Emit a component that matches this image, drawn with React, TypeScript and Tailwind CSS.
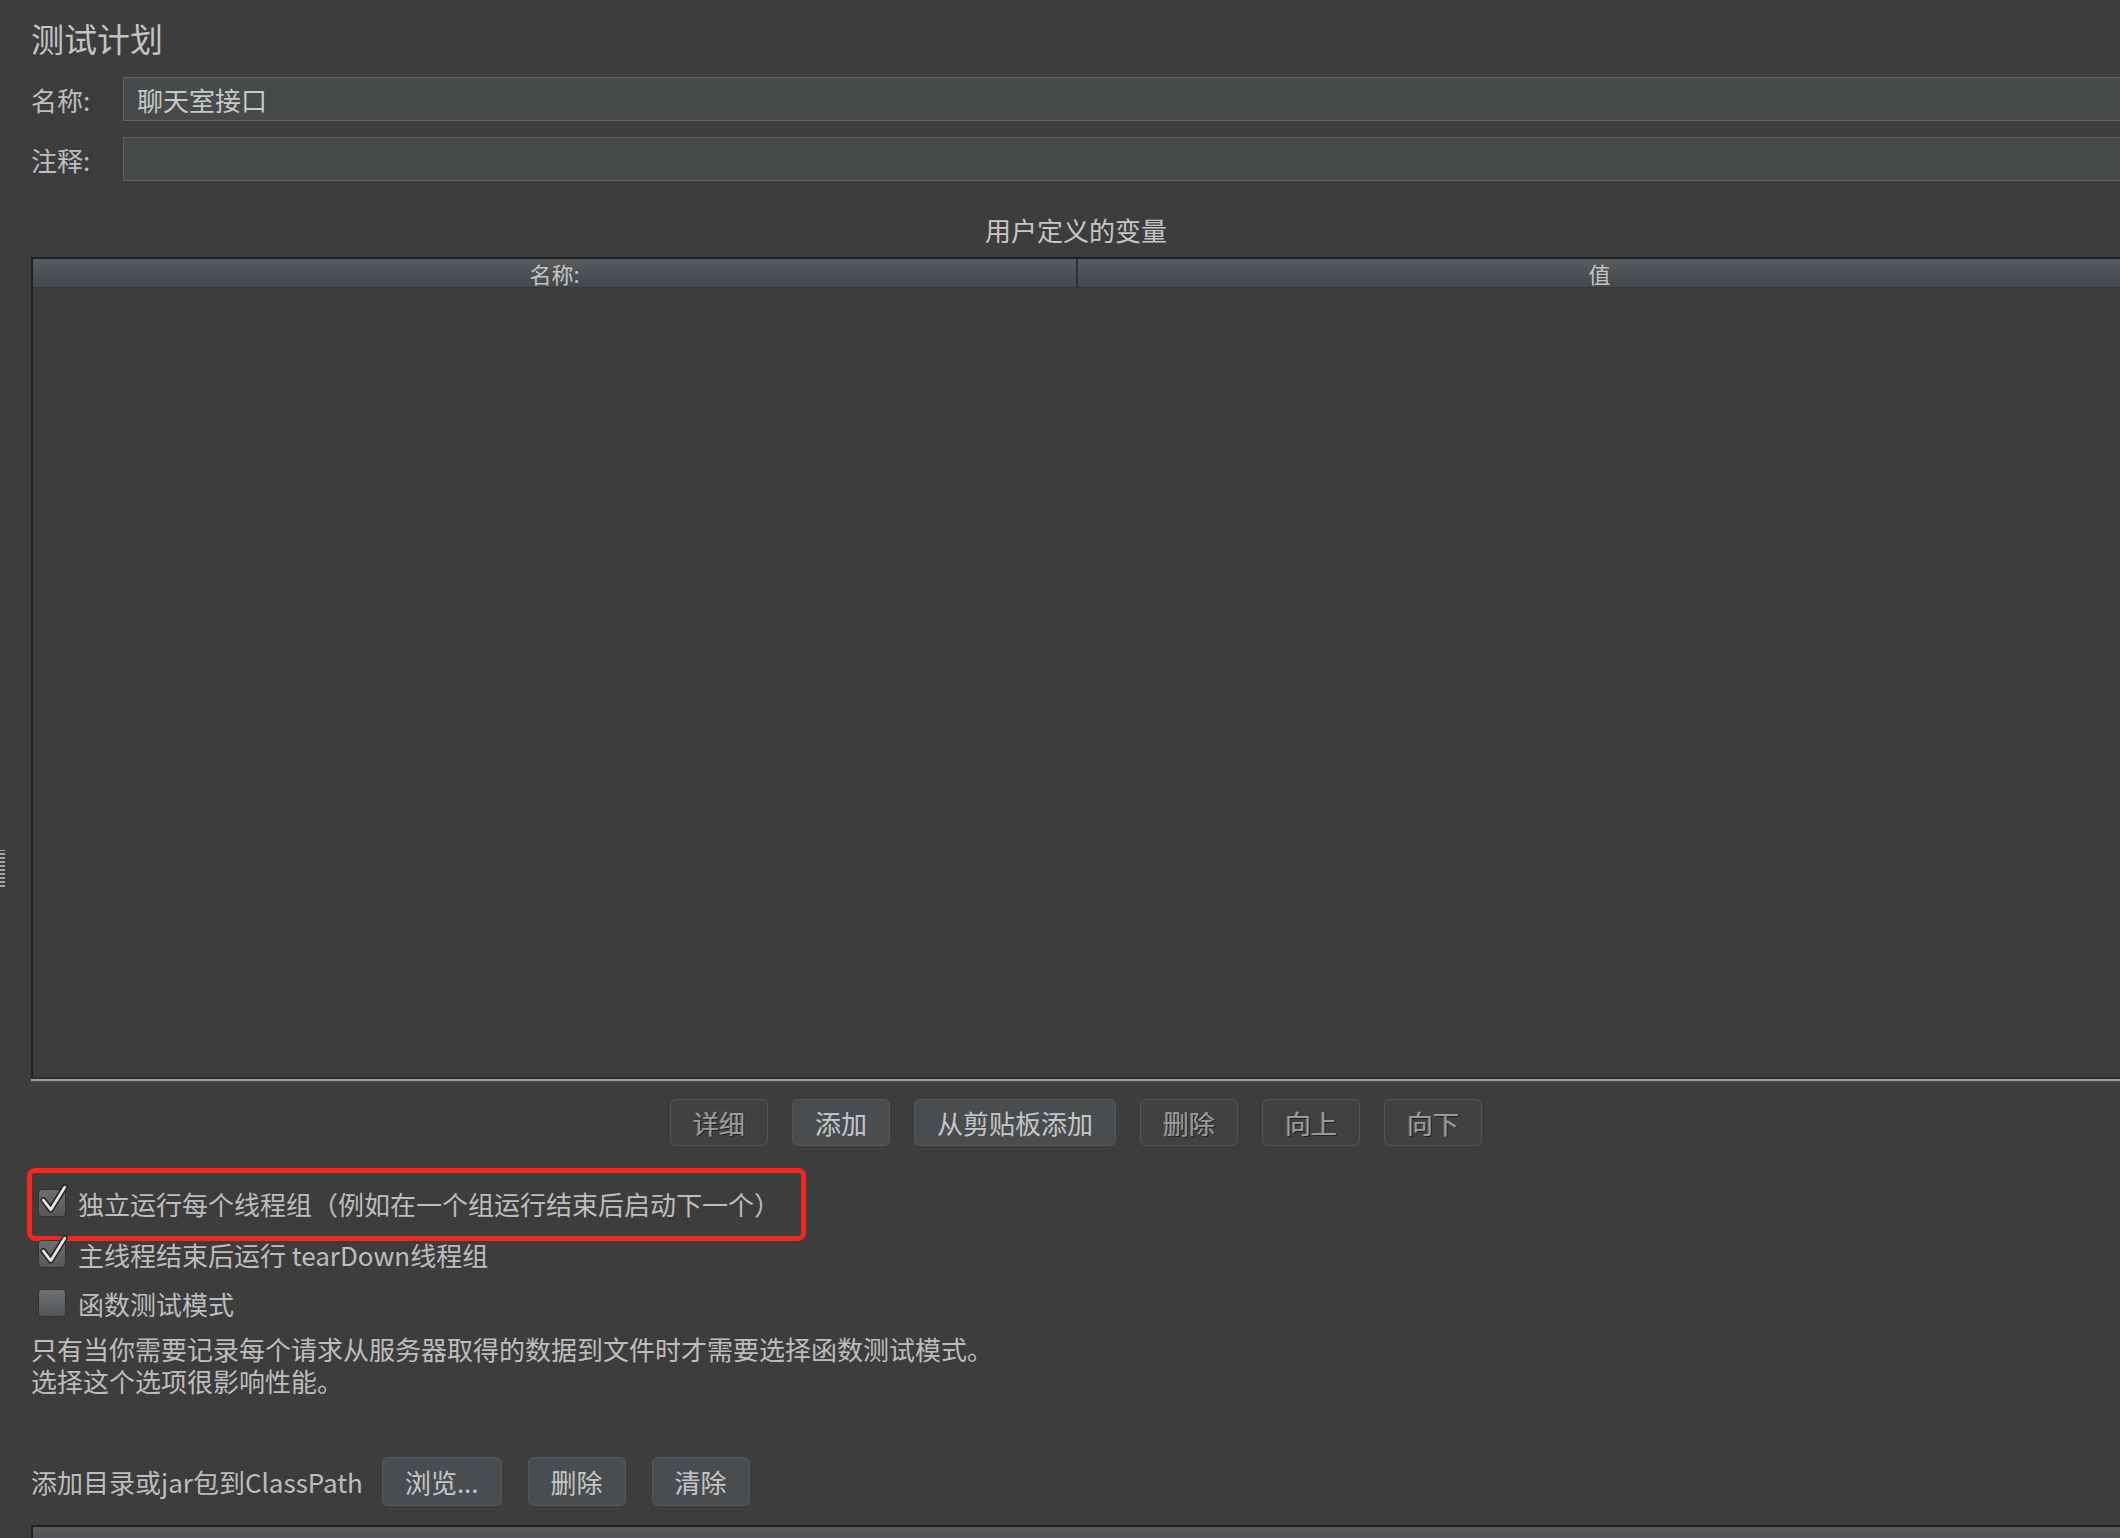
import type { ReactNode } from "react";

const font = "font-['Noto_Sans_CJK_SC','Noto_Sans',sans-serif]";

function Field({ label, value }: { label: string; value?: string }) {
  return (
    <div className="flex items-center h-[44px] mr-[-40px]">
      <span className="w-[92px] shrink-0 text-[26px] text-[#bdbdbd]">{label}</span>
      <div className="flex-1 h-full flex items-center bg-[#464a4b] border border-[#5f6262] pl-[13px] text-[26px] text-[#c8c8c8]">
        {value}
      </div>
    </div>
  );
}

function Btn({ children, enabled = false }: { children: ReactNode; enabled?: boolean }) {
  return (
    <div
      className={[
        "h-full flex items-center justify-center px-[22px] rounded-[6px] border text-[26px]",
        enabled
          ? "bg-[#4a4d50] border-[#55595b] text-[#c6c6c6]"
          : "bg-[#3f4142] border-[#535658] text-[#9b9b9b] [text-shadow:1px_1px_0_#222,-1px_0_0_#666]",
      ].join(" ")}
    >
      {children}
    </div>
  );
}

function CheckBox({ checked }: { checked: boolean }) {
  return (
    <div className="relative w-[28px] h-[28px] rounded-[4px] border border-[#333] bg-gradient-to-b from-[#6c6f71] to-[#55585a]">
      {checked && (
        <svg viewBox="0 0 28 28" className="absolute left-0 top-[-5px] w-[30px] h-[30px] overflow-visible">
          <path d="M4 14 L11 23 L24 2" fill="none" stroke="#262626" strokeWidth="5.5" strokeLinecap="round" strokeLinejoin="round" />
          <path d="M4 14 L11 23 L24 2" fill="none" stroke="#e8e8e8" strokeWidth="2.6" strokeLinecap="round" strokeLinejoin="round" />
        </svg>
      )}
    </div>
  );
}

function CheckRow({ checked, label, className = "" }: { checked: boolean; label: string; className?: string }) {
  return (
    <div className={`flex items-center h-[36px] pl-[7px] gap-[12px] ${className}`}>
      <CheckBox checked={checked} />
      <span className="text-[26px] text-[#bdbdbd] whitespace-nowrap">{label}</span>
    </div>
  );
}

export default function App() {
  return (
    <div className={`relative w-[2120px] h-[1538px] overflow-hidden bg-[#3d3d3d] ${font}`}>
      {/* splitter grip on the left edge */}
      <div className="absolute left-0 top-[850px] w-[5px] h-[37px] bg-[repeating-linear-gradient(0deg,#cfcfcf_0_2px,transparent_2px_4px)] opacity-70" />

      <div className="w-[2090px] ml-[31px] flex flex-col">
        <div className="pt-[18px] text-[33px] leading-[40px] text-[#c4c4c4]">测试计划</div>

        <div className="mt-[19px]">
          <Field label="名称:" value="聊天室接口" />
        </div>
        <div className="mt-[16px]">
          <Field label="注释:" />
        </div>

        <div className="mt-[33px] text-center text-[26px] leading-[32px] text-[#c6c6c6]">用户定义的变量</div>

        {/* variables table */}
        <div className="mt-[11px] border-t-2 border-l-2 border-[#1f1f1f] flex flex-col">
          <div className="flex h-[29px] bg-gradient-to-b from-[#575b5d] to-[#45484a] border-b border-[#353738] text-[22px] text-[#c4c4c4]">
            <div className="flex-1 flex items-center justify-center border-r-2 border-[#2e3031]">名称:</div>
            <div className="flex-1 flex items-center justify-center">值</div>
          </div>
          <div className="h-[790px] bg-[#3d3d3d] border-b border-[#2a2a2a]" />
        </div>
        <div className="mr-[-31px] h-px bg-[#353535]" />
        <div className="mr-[-31px] h-[2px] bg-[#9d9d9d]" />
        <div className="mr-[-31px] h-[2px] bg-[#484848]" />

        <div className="mt-[16px] h-[47px] flex justify-center gap-[24px]">
          <Btn>详细</Btn>
          <Btn enabled>添加</Btn>
          <Btn enabled>从剪贴板添加</Btn>
          <Btn>删除</Btn>
          <Btn>向上</Btn>
          <Btn>向下</Btn>
        </div>

        <div className="relative mt-[39px]">
          <CheckRow checked label="独立运行每个线程组（例如在一个组运行结束后启动下一个）" />
          {/* red annotation frame */}
          <div className="absolute left-[-4px] top-[-17px] w-[779px] h-[73px] border-[5px] border-[#f5261d] rounded-[8px]" />
        </div>
        <CheckRow checked label="主线程结束后运行 tearDown线程组" className="mt-[15px]" />
        <CheckRow checked={false} label="函数测试模式" className="mt-[13px]" />

        <div className="mt-[12px] text-[26px] leading-[32px] text-[#bdbdbd]">
          <p>只有当你需要记录每个请求从服务器取得的数据到文件时才需要选择函数测试模式。</p>
          <p>选择这个选项很影响性能。</p>
        </div>

        <div className="mt-[60px] h-[49px] flex items-center">
          <span className="text-[26px] text-[#bdbdbd] whitespace-nowrap">添加目录或jar包到ClassPath</span>
          <div className="ml-[19px] h-full flex gap-[26px]">
            <Btn enabled>浏览...</Btn>
            <Btn enabled>删除</Btn>
            <Btn enabled>清除</Btn>
          </div>
        </div>

        {/* classpath table */}
        <div className="mt-[19px] border-t-2 border-l-2 border-[#1f1f1f] h-[40px] bg-gradient-to-b from-[#575b5d] to-[#45484a]" />
      </div>
    </div>
  );
}
